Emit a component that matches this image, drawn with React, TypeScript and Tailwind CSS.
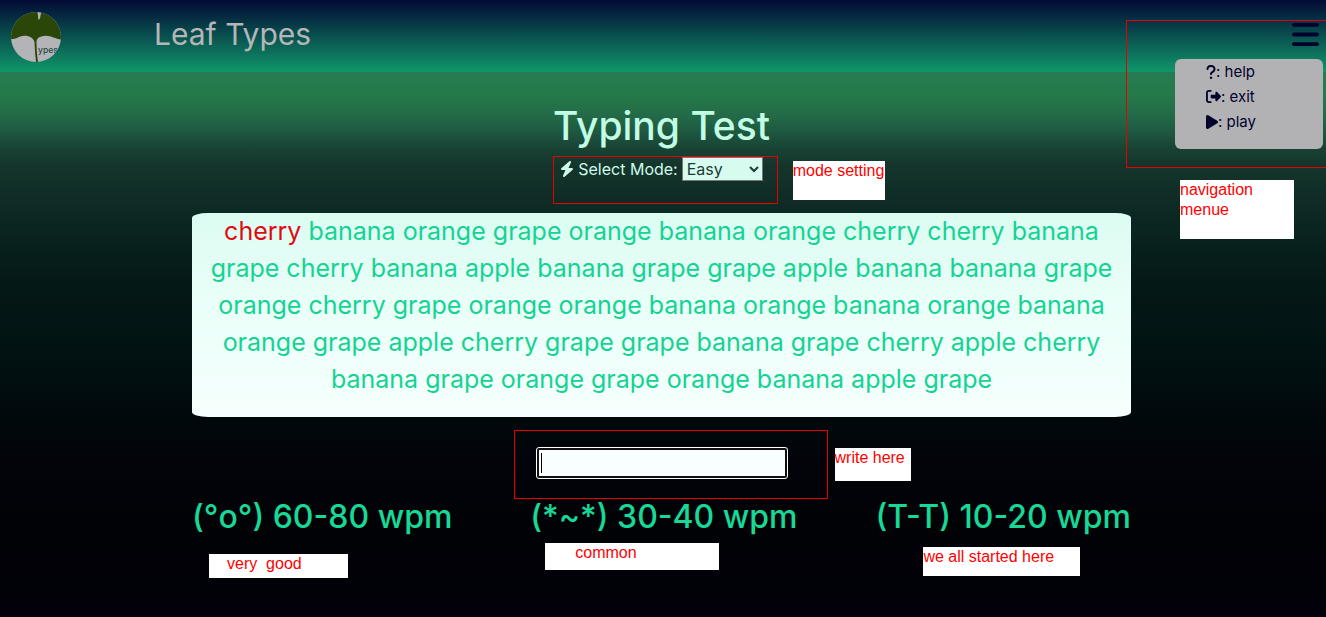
import { FaBars, FaBolt, FaPlay, FaQuestion, FaRightFromBracket } from "react-icons/fa6";
import type { ReactNode } from "react";

const words =
  "banana orange grape orange banana orange cherry cherry banana grape cherry banana apple banana grape grape apple banana banana grape orange cherry grape orange orange banana orange banana orange banana orange grape apple cherry grape grape banana grape cherry apple cherry banana grape orange grape orange banana apple grape";

function Note({ className, children }: { className: string; children: ReactNode }) {
  return (
    <span
      className={`absolute bg-white text-left font-['Liberation_Sans',sans-serif] text-base leading-5 font-normal text-[#f00] ${className}`}
    >
      {children}
    </span>
  );
}

function Logo() {
  return (
    <svg viewBox="0 0 50 50" className="size-[50px]" role="img" aria-label="Leaf Types logo">
      <defs>
        <clipPath id="disc">
          <circle cx="25" cy="25" r="25" />
        </clipPath>
      </defs>
      <g clipPath="url(#disc)">
        <rect width="50" height="50" fill="#b4b4b8" />
        <path
          d="M0 27V10L10 0H26.500L27.500 8L29 6.500L30 1H38L50 15V27.500C44 27 39 23 33 24C27.500 24.500 25.500 27 25.500 30L25.800 40L27 50H25L24 40L23.500 30C22.500 25 15 22 8 25C4 27 2 27 0 27Z"
          fill="#2b4609"
        />
        <text x="27" y="41" fontSize="8.500" fontWeight="500" fontFamily="Inter, sans-serif" fill="#234a42">
          ypes
        </text>
      </g>
    </svg>
  );
}

function Menu() {
  return (
    <ul className="absolute top-[59px] right-[3px] h-[90px] w-[148px] rounded-md bg-[#b2b2b5] pl-[31px] text-[15px] leading-[25px] text-[#02022c]">
      <li>
        <a href="#help" className="flex items-center">
          <FaQuestion className="h-4 w-[10px]" />: help
        </a>
      </li>
      <li>
        <a href="#exit" className="flex items-center">
          <FaRightFromBracket />: exit
        </a>
      </li>
      <li>
        <a href="#play" className="flex items-center">
          <FaPlay className="h-4 w-3" />: play
        </a>
      </li>
    </ul>
  );
}

export default function App() {
  return (
    <div className="relative min-h-screen overflow-hidden bg-[#02010a] font-[Inter,sans-serif]">
      <header className="relative z-10 flex h-[72px] items-start bg-[linear-gradient(to_bottom,#020a35,#109669)] pt-3 pr-[7px] pl-[11px]">
        <Logo />
        <span className="ml-[93px] text-[30px] leading-[44px] text-[#b4b6b8]">Leaf Types</span>
        <button type="button" aria-label="Menu" className="mt-[7px] ml-auto text-[#02022c]">
          <FaBars className="h-[31px] w-[27px]" />
        </button>
        <Menu />
        <div className="pointer-events-none absolute top-5 right-0 h-[148px] w-[200px] border border-r-0 border-[#e80000]">
          <Note className="top-[159px] left-[53px] h-[59px] w-[114px]">navigation menue</Note>
        </div>
      </header>

      <main className="min-h-[545px] bg-[linear-gradient(to_bottom,#267b52_0%,#257a4a_4%,#236a48_8%,#1e5840_11%,#194334_14%,#15352c_17%,#0e2b25_24%,#071f1b_33%,#041816_40%,#021112_53%,#01080c_64%,#02040a_72%,#010206_84%,#02010a_100%)] pt-[30px] pr-[195px] pb-10 pl-48 text-center">
        <h1 className="text-[39px] leading-[48px] font-medium text-[#c2fce4]">Typing Test</h1>
        <div className="relative mx-auto mt-[7px] flex h-6 w-fit items-center text-base text-[#cffbea]">
          <FaBolt className="mr-1 w-[14px]" />
          <label htmlFor="mode">Select Mode:</label>
          <select id="mode" className="ml-1 h-6 w-[81px] appearance-auto border border-[#777] bg-[#d7fbee] text-[#1a3b36]">
            <option>Easy</option>
            <option>Medium</option>
            <option>Hard</option>
          </select>
          <span className="pointer-events-none absolute -top-px -right-[15px] -left-[7px] h-12 border border-[#e80000]" />
          <Note className="top-1 left-full ml-[30px] h-[39px] w-[92px] whitespace-nowrap">mode setting</Note>
        </div>

        <section className="mt-8 h-[204px] rounded-[16px/5px] bg-[linear-gradient(to_bottom,#dcfcf2,#ebfff9_50%,#f6fffd)] px-4">
          <p className="text-[25px] leading-[37px] text-[#14d393]">
            <span className="text-[#e00b12]">cherry</span> <span>{words}</span>
          </p>
        </section>

        <div className="relative mx-auto mt-[31px] h-[30px] w-[250px]">
          <input
            aria-label="Type the words"
            className="block h-full w-full rounded-[2px] border-2 border-[#101010] bg-[#f8fffe] caret-transparent outline outline-white"
          />
          <span className="pointer-events-none absolute top-[5px] left-1 h-5 w-px bg-black" />
          <span className="pointer-events-none absolute -top-[18px] -right-[41px] -left-[23px] h-[69px] border border-[#e80000]" />
          <Note className="top-0 left-full ml-[48px] h-[33px] w-[76px] whitespace-nowrap">write here</Note>
        </div>

        <div className="mt-5 flex justify-between text-[32px] leading-[38px] font-medium text-[#16d998]">
          <h2 className="relative">
            (°o°) 60-80 wpm
            <Note className="top-[56px] left-[17px] h-6 w-[139px] pl-[18px] whitespace-pre">{"very  good"}</Note>
          </h2>
          <h2 className="relative">
            (*~*) 30-40 wpm
            <Note className="top-[45px] left-[15px] h-[27px] w-[174px] pl-[30px]">common</Note>
          </h2>
          <h2 className="relative">
            (T-T) 10-20 wpm
            <Note className="top-[49px] left-12 h-[29px] w-[157px]">we all started here</Note>
          </h2>
        </div>
      </main>
    </div>
  );
}
